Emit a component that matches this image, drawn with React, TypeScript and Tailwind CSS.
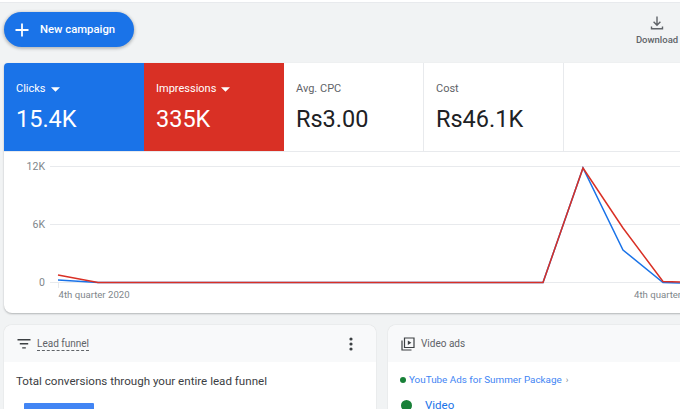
import React from "react";

const font = { fontFamily: "Roboto, sans-serif" };

function Caret() {
  return (
    <svg width="9" height="5" viewBox="0 0 10 5" className="ml-[5px]">
      <path d="M0 0h10L5 5z" fill="#fff" />
    </svg>
  );
}

function Score({ label, value, tone }: { label: string; value: string; tone?: "blue" | "red" }) {
  const bg = tone === "blue" ? "bg-[#1a73e8] text-white" : tone === "red" ? "bg-[#d93025] text-white" : "bg-white text-[#202124] border-r border-[#e8eaed]";
  return (
    <div className={`w-[140px] h-full pl-3 pt-[19px] ${bg}`}>
      <div className={`flex items-center h-[14px] text-[11px] leading-[14px] ${tone ? "" : "text-[#5f6368]"}`}>
        {label}
        {tone && <Caret />}
      </div>
      <div className="mt-[7px] text-[23.5px] leading-[32px]">{value}</div>
    </div>
  );
}

function Chart() {
  return (
    <svg width="680" height="161" viewBox="0 152 680 161" className="block">
      <g stroke="#e8eaed" strokeWidth="1">
        <path d="M50 166.5H680" />
        <path d="M50 224.5H680" />
        <path d="M50 282.5H680" />
        <path d="M58.5 282V288" />
      </g>
      <g fill="#80868b" fontSize="9.6" style={font}>
        <text x="45" y="170" textAnchor="end" fontSize="10.5">12K</text>
        <text x="45" y="228" textAnchor="end" fontSize="10.5">6K</text>
        <text x="45" y="286" textAnchor="end" fontSize="10.5">0</text>
        <text x="58.5" y="297.5">4th quarter 2020</text>
        <text x="634" y="297.5">4th quarter</text>
      </g>
      <polyline points="58,280 98,282.5 543,282.5 583,168 623,250 663,282.5 680,283" fill="none" stroke="#1a73e8" strokeWidth="1.5" />
      <polyline points="58,275 98,282.5 543,282.5 583,168 623,228 663,281.5 680,282" fill="none" stroke="#d93025" strokeWidth="1.5" />
    </svg>
  );
}

export default function App() {
  return (
    <div className="w-[680px] h-[409px] overflow-hidden bg-[#f1f3f4]" style={font}>
      <div className="h-[3px] bg-white border-b border-[#e8eaed]" />

      <div className="h-[60px] pl-1 flex justify-between">
        <button className="mt-[9px] w-[130px] h-[35px] rounded-full bg-[#1a73e8] text-white flex items-center pl-[10px] shadow-[0_1px_3px_1px_rgba(60,64,67,0.3)]">
          <svg width="16" height="16" viewBox="0 0 16 16">
            <path d="M8 1.5v13M1.5 8h13" stroke="#fff" strokeWidth="1.8" fill="none" />
          </svg>
          <span className="ml-[10px] mt-[2px] text-[11.3px] font-medium">New campaign</span>
        </button>
        <div className="flex flex-col items-center mt-[12px] mr-[1px] w-[44px] text-[#5f6368]">
          <svg width="16" height="16" viewBox="0 0 16 16">
            <path d="M8 1.5v8.5M4.6 6.8 8 10.2l3.4-3.4M2.5 11.5v2.2h11v-2.2" stroke="#5f6368" strokeWidth="1.4" fill="none" />
          </svg>
          <span className="mt-[3px] text-[9.5px] leading-[12px] font-medium">Download</span>
        </div>
      </div>

      <div className="ml-1 w-[690px] bg-white rounded-t-[4px] rounded-b-[8px] shadow-[0_1px_2px_rgba(60,64,67,0.35)] -mr-[14px] overflow-hidden">
        <div className="flex h-[89px] border-b border-[#e8eaed]">
          <Score label="Clicks" value="15.4K" tone="blue" />
          <Score label="Impressions" value="335K" tone="red" />
          <Score label="Avg. CPC" value="Rs3.00" />
          <Score label="Cost" value="Rs46.1K" />
        </div>
        <div className="-ml-1">
          <Chart />
        </div>
      </div>

      <div className="mt-3 ml-1 flex gap-3 w-[700px]">
        <div className="w-[372px] h-[100px] bg-white rounded-t-[8px] shadow-[0_0_1px_rgba(60,64,67,0.35)]">
          <div className="h-[37px] bg-[#f8f9fa] rounded-t-[8px] flex items-center pl-[12px] pr-[23px] text-[#5f6368]">
            <svg width="16" height="16" viewBox="0 0 16 16">
              <path d="M1.5 3.7h13M3.8 7.8h8.4M6.2 11.9h3.6" stroke="#3c4043" strokeWidth="1.4" fill="none" />
            </svg>
            <span className="ml-[5px] text-[10px] leading-[13px] border-b border-dashed border-[#5f6368]">Lead funnel</span>
            <svg width="4" height="14" viewBox="0 0 4 14" className="ml-auto">
              <circle cx="2" cy="2" r="1.6" fill="#3c4043" />
              <circle cx="2" cy="7" r="1.6" fill="#3c4043" />
              <circle cx="2" cy="12" r="1.6" fill="#3c4043" />
            </svg>
          </div>
          <div className="pl-3 pt-[12px] text-[11.6px] leading-[14px] text-[#3c4043]">Total conversions through your entire lead funnel</div>
          <div className="ml-[20px] mt-[15px] w-[70px] h-[10px] bg-[#4285f4] rounded-t-[1px]" />
        </div>
        <div className="w-[310px] h-[100px] bg-white rounded-t-[8px] shadow-[0_0_1px_rgba(60,64,67,0.35)]">
          <div className="h-[37px] bg-[#f8f9fa] rounded-t-[8px] flex items-center pl-[13px] text-[#5f6368]">
            <svg width="14" height="14" viewBox="0 0 14 14">
              <path d="M3.5 1h9.5v9.5H3.5zM1 3.5V13h9.5" stroke="#3c4043" strokeWidth="1.2" fill="none" />
              <path d="M6.8 3.4v4.7L10.4 5.8z" fill="#3c4043" />
            </svg>
            <span className="ml-[6px] text-[10px]">Video ads</span>
          </div>
          <div className="pl-3 pt-[11px] flex items-center text-[9.9px] leading-[14px] text-[#4285f4]">
            <span className="w-[6px] h-[6px] rounded-full bg-[#188038] mr-[3px]" />
            YouTube Ads for Summer Package
            <span className="ml-1 text-[9px] text-[#80868b]">›</span>
          </div>
          <div className="pl-[13px] mt-[10px] flex items-center text-[11.5px] text-[#1a73e8]">
            <span className="w-[11px] h-[11px] rounded-full bg-[#188038] mr-[13px]" />
            Video
          </div>
        </div>
      </div>
    </div>
  );
}
